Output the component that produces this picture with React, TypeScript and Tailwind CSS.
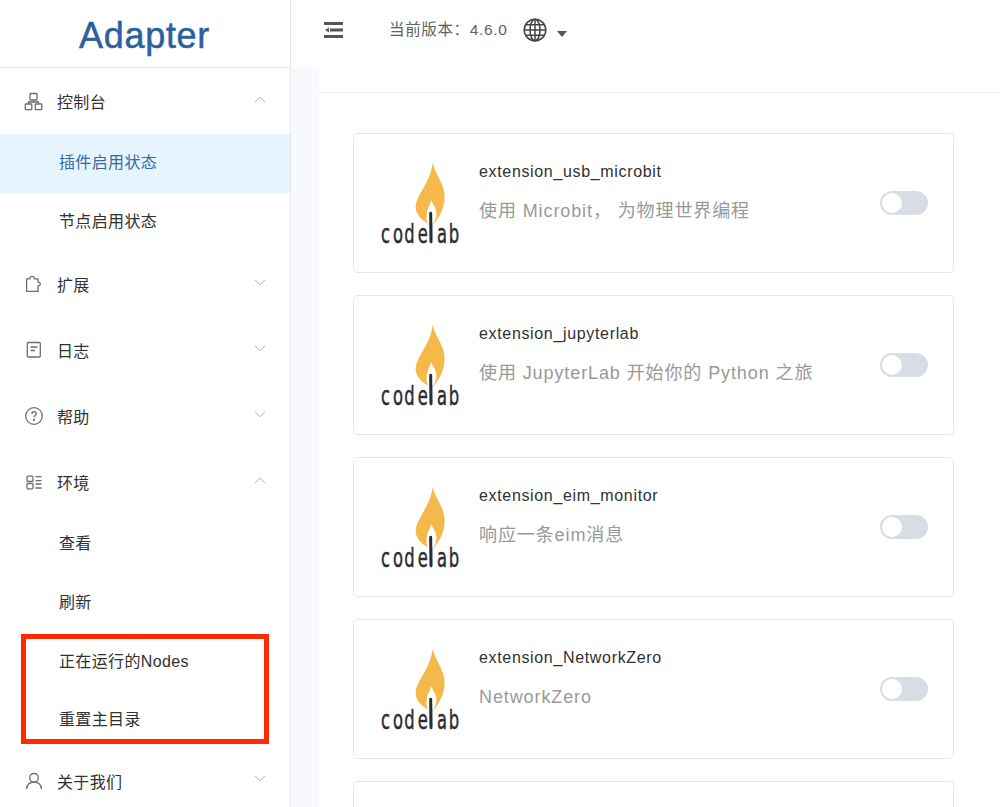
import { ReactNode } from 'react'

const FONT = "font-['Liberation_Sans','Noto_Sans_CJK_SC',sans-serif]"

function Chevron({ up }: { up?: boolean }) {
  return (
    <svg width="12" height="7" viewBox="0 0 12 7" fill="none" stroke="#a9adb3" strokeWidth="1">
      <path d={up ? 'M1 6.2 6 1.2l5 5' : 'M1 .8l5 5 5-5'} />
    </svg>
  )
}

function Icon({ children }: { children: ReactNode }) {
  return (
    <svg width="20" height="20" viewBox="0 0 20 20" fill="none" stroke="#6b6e73" strokeWidth="1.3" className="shrink-0">
      {children}
    </svg>
  )
}

const icons = {
  network: (
    <Icon>
      <rect x="6" y="2.500" width="7" height="6.500" rx=".6" />
      <rect x="1.300" y="13" width="6.500" height="5.700" rx=".6" />
      <rect x="11.300" y="13" width="6.500" height="5.700" rx=".6" />
      <path d="M9.500 9v2M4.500 13v-2h10v2" />
    </Icon>
  ),
  puzzle: (
    <Icon>
      <path d="M2.600 4.800h3.400c-.5-3.300 5-3.300 4.400 0h3.600v3.300c3-.5 3 4.200 0 3.700v5.600H2.600z" strokeLinejoin="round" />
    </Icon>
  ),
  log: (
    <Icon>
      <rect x="3.300" y="2.500" width="13" height="14.500" rx="1" />
      <path d="M6.500 7h7M6.500 10.500h4.500" />
    </Icon>
  ),
  help: (
    <Icon>
      <circle cx="10" cy="10" r="8.300" />
      <path d="M7.800 8c0-3 4.500-3 4.500-.2 0 1.800-2.300 1.800-2.300 3.700" />
      <circle cx="10" cy="14" r=".5" fill="#6b6e73" />
    </Icon>
  ),
  env: (
    <Icon>
      <rect x="3" y="4.200" width="6" height="5.300" rx="1" />
      <rect x="3" y="11.500" width="6" height="5.300" rx="1" />
      <path d="M11.500 4.700h6M11.500 8.700h6M11.500 12h6M11.500 16h6" />
    </Icon>
  ),
  user: (
    <Icon>
      <circle cx="10" cy="6.800" r="4.300" />
      <path d="M2.500 18c.5-4.500 3.500-7 7.500-7s7 2.500 7.500 7" />
    </Icon>
  ),
}

function MenuRow({ icon, label, up }: { icon: ReactNode; label: string; up?: boolean }) {
  return (
    <div className="flex h-[66px] items-center pl-[24px] pr-[24px] text-[16px] tracking-[0.35px] text-[#303133]">
      <span className="w-[33px]">{icon}</span>
      <span className="flex-1 pt-[4px]">{label}</span>
      <span className="-mt-[4px]">
        <Chevron up={up} />
      </span>
    </div>
  )
}

function SubRow({ label, active }: { label: string; active?: boolean }) {
  return (
    <div className={`flex h-[58.6px] items-center pl-[59px] text-[16px] tracking-[0.35px] ${active ? 'bg-[#e6f5fd] text-[#3a69a6]' : 'text-[#303133]'}`}>
      {label}
    </div>
  )
}

function CodelabLogo() {
  return (
    <svg width="87" height="85" viewBox="110 120 261 255" className="-mt-[1px] shrink-0 overflow-visible">
      <path
        d="M277 128C285 165 313 190 313 230C313 265 295 295 277 315C250 310 226 285 226 262C226 225 270 190 277 128Z"
        fill="#f5b94a"
      />
      <path
        d="M272 240C278 255 290 265 288 285C287 298 280 310 277 315L262 310C258 300 258 290 260 275C262 262 270 255 272 240Z"
        fill="#fff"
      />
      <path d="M271 280L272 364" stroke="#2a2d33" strokeWidth="9" strokeLinecap="round" />
      <text
        transform="scale(0.6 1)"
        x="203 263 320 387 442 483 542"
        y="369"
        fontFamily="'DejaVu Sans', sans-serif"
        fontSize="82"
        fill="#2a2d33"
        stroke="#2a2d33"
        strokeWidth="1.500"
      >
        codelab
      </text>
    </svg>
  )
}

const plugins = [
  { name: 'extension_usb_microbit', desc: '使用 Microbit， 为物理世界编程' },
  { name: 'extension_jupyterlab', desc: '使用 JupyterLab 开始你的 Python 之旅' },
  { name: 'extension_eim_monitor', desc: '响应一条eim消息' },
  { name: 'extension_NetworkZero', desc: 'NetworkZero' },
  { name: '', desc: '' },
]

function PluginCard({ name, desc }: { name: string; desc: string }) {
  return (
    <div className="flex h-[140px] shrink-0 items-center rounded-[4px] border border-[#e6e8eb] pl-[23px] pr-[25px]">
      {name && (
        <>
          <CodelabLogo />
          <div className="ml-[15px] flex-1 self-start pt-[28px]">
            <div className="text-[16px] leading-[20px] tracking-[0.66px] text-[#303133]">{name}</div>
            <div className="mt-[17px] text-[18px] leading-[24px] tracking-[0.9px] text-[#999]">{desc}</div>
          </div>
          <div className="flex h-[24px] w-[48px] items-center rounded-full bg-[#d8dce5] pl-[2px]">
            <div className="h-[20px] w-[20px] rounded-full bg-white" />
          </div>
        </>
      )}
    </div>
  )
}

export default function App() {
  return (
    <div className={`relative flex h-[807px] w-[1000px] overflow-hidden bg-white ${FONT}`}>
      {/* Sidebar */}
      <aside className="w-[291px] shrink-0 border-r border-[#e6e6e6]">
        <div className="flex h-[68px] items-center justify-center border-b border-[#e6e6e6] pr-[1px] pt-[4px] text-[36px] tracking-[0.7px] text-[#2b5f9e] [-webkit-text-stroke:0.5px_#2b5f9e]">
          Adapter
        </div>
        <MenuRow icon={icons.network} label="控制台" up />
        <SubRow label="插件启用状态" active />
        <SubRow label="节点启用状态" />
        <MenuRow icon={icons.puzzle} label="扩展" />
        <MenuRow icon={icons.log} label="日志" />
        <MenuRow icon={icons.help} label="帮助" />
        <MenuRow icon={icons.env} label="环境" up />
        <SubRow label="查看" />
        <SubRow label="刷新" />
        <SubRow label="正在运行的Nodes" />
        <SubRow label="重置主目录" />
        <div className="-mt-[2px]">
          <MenuRow icon={icons.user} label="关于我们" />
        </div>
      </aside>

      {/* Right column */}
      <div className="flex min-w-0 flex-1 flex-col">
        <header className="flex h-[68px] shrink-0 items-center pb-[8px] text-[#606266]">
          <svg width="20" height="16" viewBox="0 0 20 16" className="ml-[33px]" fill="#555">
            <rect x="0" y="0" width="19" height="3" />
            <rect x="6" y="6.500" width="13" height="3" />
            <rect x="0" y="13" width="19" height="3" />
            <path d="M1 8 5 5.500v5z" />
          </svg>
          <span className="ml-[45px] text-[15.500px] tracking-[0.65px]">当前版本：4.6.0</span>
          <svg width="24" height="24" viewBox="0 0 24 24" className="ml-[16px]" fill="none" stroke="#444" strokeWidth="1.500">
            <circle cx="12" cy="12" r="10.800" />
            <ellipse cx="12" cy="12" rx="5" ry="10.800" />
            <path d="M12 1.200v21.600M1.200 12h21.600M2.800 6.800h18.400M2.800 17.200h18.400" />
          </svg>
          <svg width="10" height="6" viewBox="0 0 10 6" className="ml-[10px] mt-[8px]" fill="#555">
            <path d="M0 0h10L5 6z" />
          </svg>
        </header>

        <div className="flex min-h-0 flex-1">
          <div className="w-[28px] shrink-0 bg-[#f7f9fd]" />
          <main className="min-w-0 flex-1 overflow-hidden">
            <div className="h-[25px] border-b border-[#ebebeb]" />
            <div className="flex flex-col gap-[22px] pl-[34px] pr-[46px] pt-[40px]">
              {plugins.map((p, i) => (
                <PluginCard key={i} name={p.name} desc={p.desc} />
              ))}
            </div>
          </main>
        </div>
      </div>

      {/* Red annotation */}
      <div className="absolute left-[21px] top-[634px] h-[110px] w-[248px] border-[5px] border-[#ff2a00]" />
    </div>
  )
}
